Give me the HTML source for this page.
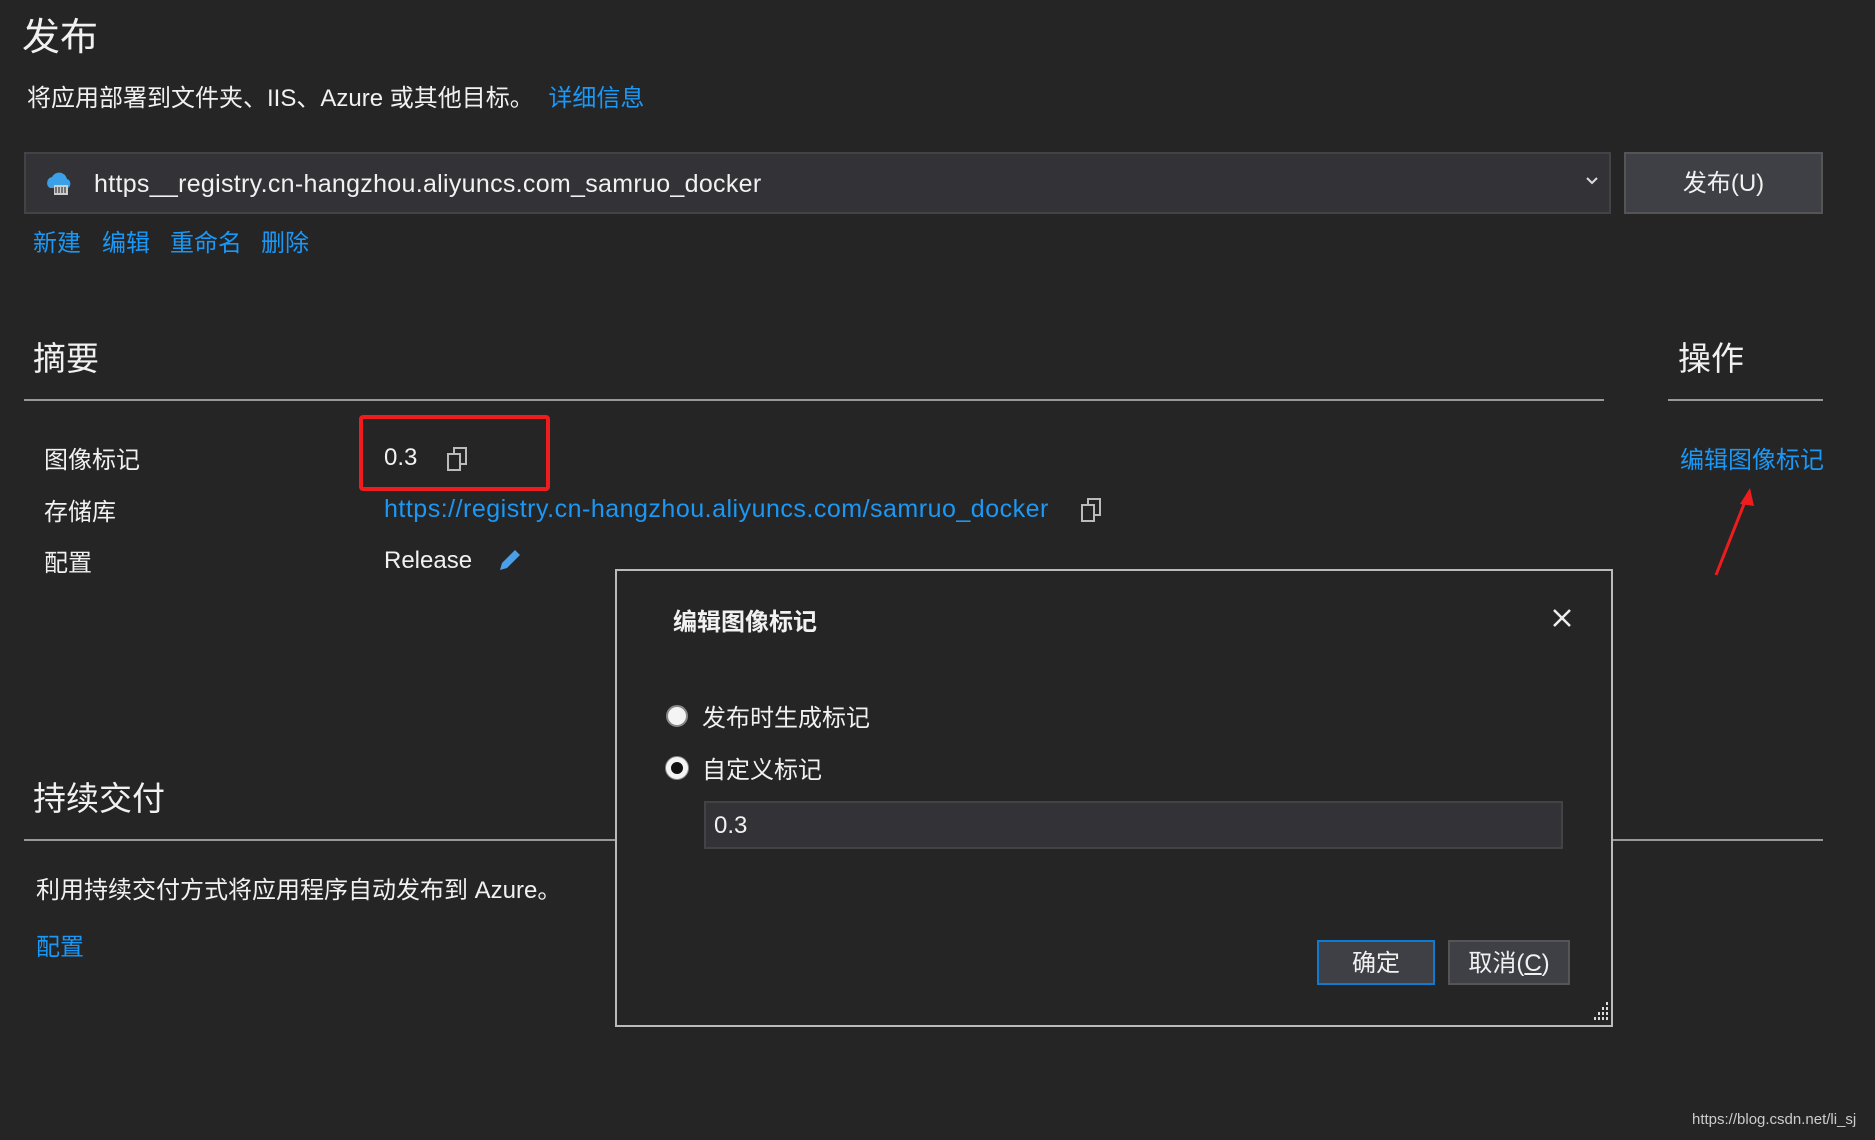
<!DOCTYPE html>
<html><head><meta charset="utf-8"><style>
*{margin:0;padding:0;box-sizing:border-box}
body{width:1875px;height:1140px;background:#252526;color:#f1f1f1;font-family:"Liberation Sans","Noto Sans CJK SC",sans-serif;position:relative;overflow:hidden}
.a{position:absolute;white-space:nowrap}
.l{color:#1b98f5}
</style></head><body>
<div class="a" style="left:22px;top:6px;font-size:38px">发布</div>
<div class="a" style="left:27px;top:78px;font-size:24px">将应用部署到文件夹、IIS、Azure 或其他目标。 <span class="l" style="margin-left:8px">详细信息</span></div>
<div class="a" style="left:24px;top:152px;width:1587px;height:62px;background:#333337;border:2px solid #434346"></div>
<svg class="a" style="left:44px;top:168px" width="32" height="30" viewBox="0 0 32 30"><path d="M6 20a6 6 0 0 1 2-11 8 8 0 0 1 15 2 5 5 0 0 1 1 9z" fill="#3aa0e8"/><rect x="10" y="17" width="14" height="10" fill="#ccc"/><path d="M12 19v6M15 19v6M18 19v6M21 19v6" stroke="#555" stroke-width="1.5"/></svg>
<div class="a" style="left:94px;top:170px;font-size:25px;letter-spacing:0.3px">https__registry.cn-hangzhou.aliyuncs.com_samruo_docker</div>
<svg class="a" style="left:1585px;top:175px" width="14" height="12"><path d="M2 3l5 5 5-5" stroke="#ddd" stroke-width="2" fill="none"/></svg>
<div class="a" style="left:1624px;top:152px;width:199px;height:62px;background:#3f3f46;border:2px solid #555;font-size:24px;text-align:center;line-height:60px">发布(U)</div>
<div class="a l" style="left:33px;top:223px;font-size:24px">新建</div>
<div class="a l" style="left:102px;top:223px;font-size:24px">编辑</div>
<div class="a l" style="left:170px;top:223px;font-size:24px">重命名</div>
<div class="a l" style="left:261px;top:223px;font-size:24px">删除</div>
<div class="a" style="left:33px;top:332px;font-size:33px">摘要</div>
<div class="a" style="left:1678px;top:332px;font-size:33px">操作</div>
<div class="a" style="left:24px;top:399px;width:1580px;height:2px;background:#999"></div>
<div class="a" style="left:1668px;top:399px;width:155px;height:2px;background:#999"></div>
<div class="a" style="left:44px;top:440px;font-size:24px">图像标记</div>
<div class="a" style="left:44px;top:492px;font-size:24px">存储库</div>
<div class="a" style="left:44px;top:543px;font-size:24px">配置</div>
<div class="a" style="left:359px;top:415px;width:191px;height:76px;border:4px solid #ee1c1c;border-radius:4px"></div>
<div class="a" style="left:384px;top:444px;font-size:24px">0.3</div>
<svg class="a" style="left:446px;top:446px" width="24" height="26"><rect x="2" y="8" width="12" height="16" fill="none" stroke="#bbb" stroke-width="2"/><path d="M8 8V2h12v16h-6" fill="none" stroke="#bbb" stroke-width="2"/></svg>
<div class="a l" style="left:384px;top:495px;font-size:25px;letter-spacing:0.5px">https://registry.cn-hangzhou.aliyuncs.com/samruo_docker</div>
<svg class="a" style="left:1080px;top:497px" width="24" height="26"><rect x="2" y="8" width="12" height="16" fill="none" stroke="#bbb" stroke-width="2"/><path d="M8 8V2h12v16h-6" fill="none" stroke="#bbb" stroke-width="2"/></svg>
<div class="a" style="left:384px;top:547px;font-size:24px">Release</div>
<svg class="a" style="left:496px;top:546px" width="28" height="28"><path d="M4 24l2-7 13-13 5 5-13 13z" fill="#4a9fe8"/></svg>
<div class="a l" style="left:1680px;top:440px;font-size:24px">编辑图像标记</div>
<svg class="a" style="left:1700px;top:480px" width="70" height="100"><path d="M16 95L48 14" stroke="#ee1c1c" stroke-width="3"/><path d="M50 8l-10 16 14 2z" fill="#ee1c1c"/></svg>
<div class="a" style="left:33px;top:772px;font-size:33px">持续交付</div>
<div class="a" style="left:24px;top:839px;width:1799px;height:2px;background:#999"></div>
<div class="a" style="left:36px;top:870px;font-size:24px">利用持续交付方式将应用程序自动发布到 Azure。</div>
<div class="a l" style="left:36px;top:927px;font-size:24px">配置</div>
<div class="a" style="left:615px;top:569px;width:998px;height:458px;background:#252526;border:2px solid #bbb"></div>
<div class="a" style="left:673px;top:602px;font-size:24px;font-weight:bold">编辑图像标记</div>
<svg class="a" style="left:1552px;top:608px" width="20" height="20"><path d="M2 2l16 16M18 2L2 18" stroke="#eee" stroke-width="2.5"/></svg>
<div class="a" style="left:666px;top:705px;width:22px;height:22px;border-radius:50%;background:#f4f4f4;border:2px solid #888"></div>
<div class="a" style="left:702px;top:698px;font-size:24px">发布时生成标记</div>
<div class="a" style="left:666px;top:757px;width:22px;height:22px;border-radius:50%;background:#111;border:5px solid #f4f4f4;box-shadow:0 0 0 1px #888"></div>
<div class="a" style="left:702px;top:750px;font-size:24px">自定义标记</div>
<div class="a" style="left:704px;top:801px;width:859px;height:48px;background:#333337;border:2px solid #434346;font-size:24px;line-height:46px;padding-left:8px">0.3</div>
<div class="a" style="left:1317px;top:940px;width:118px;height:45px;background:#3f3f46;border:2px solid #0e7ad0;font-size:24px;text-align:center;line-height:43px">确定</div>
<div class="a" style="left:1448px;top:940px;width:122px;height:45px;background:#3f3f46;border:2px solid #555;font-size:24px;text-align:center;line-height:43px">取消(<u>C</u>)</div>
<svg class="a" style="left:1588px;top:1002px" width="22" height="22"><g fill="#ddd"><rect x="18" y="0" width="2" height="3"/><rect x="14" y="5" width="2" height="3"/><rect x="18" y="5" width="2" height="3"/><rect x="10" y="10" width="2" height="3"/><rect x="14" y="10" width="2" height="3"/><rect x="18" y="10" width="2" height="3"/><rect x="6" y="15" width="2" height="3"/><rect x="10" y="15" width="2" height="3"/><rect x="14" y="15" width="2" height="3"/><rect x="18" y="15" width="2" height="3"/></g></svg>
<div class="a" style="left:1692px;top:1111px;font-size:15px;color:#ccc">https://blog.csdn.net/li_sj</div>
</body></html>
